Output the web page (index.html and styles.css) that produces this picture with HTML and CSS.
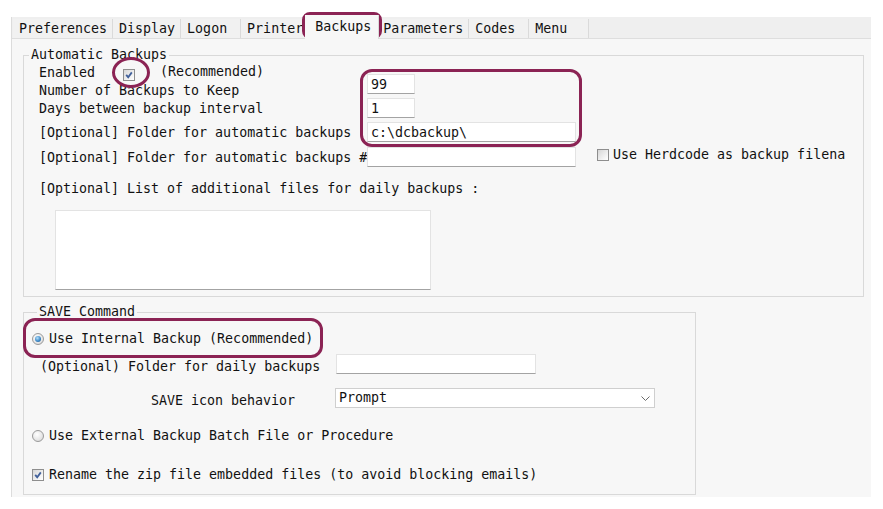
FILE: index.html
```html
<!DOCTYPE html>
<html lang="en">

<head>
    <meta charset="UTF-8">
    <meta name="viewport" content="width=device-width, initial-scale=1.0">
    <title>Backups</title>
    <link rel="stylesheet" href="styles.css">
</head>

<body>
    <div class="window">
        <div class="tabs">
            <span class="tab">Preferences</span>
            <span class="tab">Display</span>
            <span class="tab">Logon</span>
            <span class="tab">Printer</span>
            <span class="tab active">Backups</span>
            <span class="tab">Parameters</span>
            <span class="tab">Codes</span>
            <span class="tab">Menu</span>
        </div>

        <fieldset class="group auto">
            <legend>Automatic Backups</legend>
            <div class="auto-body">
                <div class="auto-top">
                    <div class="labels">
                        <div class="line">
                            <span>Enabled</span>
                            <span class="cb cb-enabled"><svg viewBox="0 0 10 10" width="10" height="10"><path d="M2.2 4.8 L4.2 7.2 L7.8 2.4" /></svg></span>
                            <span class="rec">(Recommended)</span>
                        </div>
                        <div class="line">Number of Backups to Keep</div>
                        <div class="line">Days between backup interval</div>
                        <div class="line folder1">[Optional] Folder for automatic backups</div>
                        <div class="line folder2">[Optional] Folder for automatic backups #</div>
                    </div>
                    <div class="inputs">
                        <input class="field short" type="text" value="99">
                        <input class="field short" type="text" value="1">
                        <input class="field long" type="text" value="c:\dcbackup\">
                        <input class="field long last" type="text" value="">
                    </div>
                    <div class="herd">
                        <span class="cb"></span>
                        <span class="herd-text">Use Herdcode as backup filena</span>
                    </div>
                </div>
                <div class="line list-label">[Optional] List of additional files for daily backups :</div>
                <textarea class="field list"></textarea>
            </div>
        </fieldset>

        <fieldset class="group save">
            <legend>SAVE Command</legend>
            <div class="save-body">
                <div class="line radio-row">
                    <span class="rb on"></span>
                    <span>Use Internal Backup (Recommended)</span>
                </div>
                <div class="opt-row">
                    <label class="opt-label">(Optional) Folder for daily backups</label>
                    <input class="field daily" type="text" value="">
                </div>
                <div class="opt-row icon-row">
                    <label class="opt-label">SAVE icon behavior</label>
                    <div class="choice">
                        <span>Prompt</span>
                        <svg viewBox="0 0 9 5" width="9" height="5"><path d="M0.5 0.5 L4.5 4.5 L8.5 0.5" /></svg>
                    </div>
                </div>
                <div class="line radio-row external">
                    <span class="rb"></span>
                    <span>Use External Backup Batch File or Procedure</span>
                </div>
                <div class="line radio-row rename">
                    <span class="cb"><svg viewBox="0 0 10 10" width="10" height="10"><path d="M2.2 4.8 L4.2 7.2 L7.8 2.4" /></svg></span>
                    <span>Rename the zip file embedded files (to avoid blocking emails)</span>
                </div>
            </div>
        </fieldset>

        <!-- highlight marks -->
        <div class="mark mark-tab"></div>
        <div class="mark mark-check"></div>
        <div class="mark mark-inputs"></div>
        <div class="mark mark-radio"></div>
    </div>
</body>

</html>
```

FILE: styles.css
```css
body {
    margin: 0;
    background-color: #fff;
    font-family: "DejaVu Sans Mono", "Liberation Mono", monospace;
    font-size: 13.3px;
    line-height: 18px;
    color: #111;
}

.window {
    position: relative;
    box-sizing: border-box;
    width: 860px;
    height: 480px;
    margin: 17px 0 0 11px;
    border-left: 1px solid #dcdcdc;
    background-color: #f7f7f7;
}

/* tab strip */

.tabs {
    display: flex;
    align-items: flex-start;
    height: 21px;
    padding-left: 1px;
    background-color: #efefef;
    border-bottom: 1px solid #dedede;
}

.tab {
    box-sizing: border-box;
    min-width: 60px;
    height: 19px;
    margin-top: 2px;
    padding: 1px 5px 0 6px;
    border-right: 1px solid #dadada;
    background-color: #f1f1f1;
    white-space: nowrap;
}

.tab.active {
    position: relative;
    z-index: 1;
    height: 24px;
    margin: -2px -2px 0 -4px;
    padding: 3px 7px 0 10px;
    background-color: #f7f7f7;
}

/* group boxes */

.group {
    box-sizing: border-box;
    min-width: 0;
    margin: 0 0 0 11px;
    padding: 0;
    border: 1px solid #d9d9d9;
}

.group legend {
    padding: 0 2px;
    line-height: 18px;
}

.auto {
    width: 841px;
    margin-top: 7px;
    padding-bottom: 6px;
}

.auto legend {
    margin-left: 5px;
}

.auto-body {
    padding-left: 15px;
}

.auto-top {
    display: flex;
    align-items: flex-start;
}

.labels {
    width: 328px;
}

.line {
    display: flex;
    align-items: center;
    height: 18px;
    white-space: nowrap;
}

.folder1 {
    margin-top: 6px;
}

.folder2 {
    margin-top: 7px;
}

.inputs {
    display: flex;
    flex-direction: column;
    align-items: flex-start;
    gap: 4px;
    width: 209px;
    margin-top: 10px;
}

.inputs .last {
    margin-top: 1px;
}

.field {
    box-sizing: border-box;
    height: 20px;
    margin: 0;
    padding: 0 3px;
    border: 1px solid #e3e3e3;
    border-bottom-color: #a3a3a3;
    background-color: #fff;
    font: inherit;
    color: inherit;
    outline: none;
}

.short {
    width: 48px;
}

.long {
    width: 209px;
}

.herd {
    display: flex;
    align-items: center;
    width: 248px;
    height: 18px;
    margin: 82px 0 0 21px;
    white-space: nowrap;
}

.herd-text {
    flex-shrink: 0;
    margin-left: 4px;
}

.list-label {
    margin-top: 13px;
}

.list {
    display: block;
    width: 376px;
    height: 80px;
    margin: 12px 0 0 16px;
    resize: none;
}

.save {
    width: 673px;
    margin-top: 6px;
    padding-bottom: 10px;
}

.save legend {
    margin-left: 13px;
}

.save-body {
    padding-left: 8px;
}

.radio-row {
    margin-top: 9px;
}

.radio-row .rb,
.radio-row .cb {
    margin-right: 5px;
}

.opt-row {
    display: flex;
    align-items: flex-start;
    margin-top: 6px;
}

.icon-row {
    margin-top: 12px;
}

.opt-label {
    box-sizing: border-box;
    width: 304px;
    margin-top: 4px;
    padding-left: 8px;
    white-space: nowrap;
}

.icon-row .opt-label {
    padding-left: 119px;
}

.daily {
    width: 200px;
}

.choice {
    box-sizing: border-box;
    display: flex;
    align-items: center;
    justify-content: space-between;
    width: 320px;
    height: 20px;
    margin-left: -1px;
    padding: 0 4px 0 3px;
    border: 1px solid #cfcfcf;
    background-color: #fff;
}

.choice svg path {
    fill: none;
    stroke: #6b6b6b;
    stroke-width: 1;
}

.external {
    margin-top: 17px;
}

.rename {
    margin-top: 21px;
}

/* check boxes and radios */

.cb {
    box-sizing: border-box;
    display: inline-flex;
    align-items: center;
    justify-content: center;
    flex-shrink: 0;
    width: 12px;
    height: 12px;
    border: 1px solid #8e8e8e;
    background: linear-gradient(135deg, #d6d6d6, #f4f4f4 70%, #fff);
}

.cb svg path {
    fill: none;
    stroke: #41609a;
    stroke-width: 1.8;
}

.cb-enabled {
    align-self: flex-start;
    margin: 5px 0 0 28px;
}

.rec {
    margin: -2px 0 0 25px;
}

.rb {
    box-sizing: border-box;
    display: inline-flex;
    align-items: center;
    justify-content: center;
    flex-shrink: 0;
    width: 12px;
    height: 12px;
    border: 1px solid #9a9a9a;
    border-radius: 50%;
    background: radial-gradient(circle at 40% 35%, #fff, #e6e6e6 60%, #cfcfcf);
}

.rb.on::after {
    content: "";
    width: 6px;
    height: 6px;
    border-radius: 50%;
    background: radial-gradient(circle at 40% 35%, #b6e0fa, #3f8bc9 55%, #1d4f86);
}

/* highlight marks drawn over the form */

.mark {
    position: absolute;
    box-sizing: border-box;
    border: 3px solid #8b2354;
    border-radius: 12px;
    pointer-events: none;
}

.mark-tab {
    left: 290px;
    top: -5px;
    width: 80px;
    height: 27px;
    border-radius: 8px;
}

.mark-check {
    left: 100px;
    top: 40px;
    width: 38px;
    height: 31px;
    border-radius: 50%;
}

.mark-inputs {
    left: 348px;
    top: 52px;
    width: 222px;
    height: 78px;
}

.mark-radio {
    left: 11px;
    top: 301px;
    width: 300px;
    height: 40px;
}
```
